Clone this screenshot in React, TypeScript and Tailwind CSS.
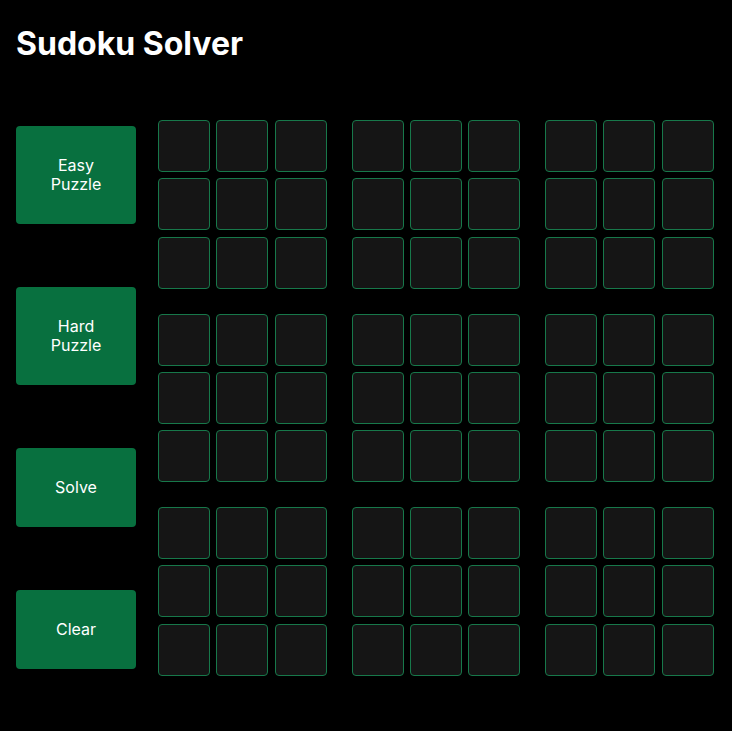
import { useState } from "react";

const buttons = [
  { label: ["Easy", "Puzzle"], tall: true },
  { label: ["Hard", "Puzzle"], tall: true },
  { label: ["Solve"], tall: false },
  { label: ["Clear"], tall: false },
];

function Block({ cells, onChange }: { cells: string[]; onChange: (i: number, v: string) => void }) {
  return (
    <div className="grid grid-cols-3 gap-[6.25px]">
      {cells.map((v, i) => (
        <input
          key={i}
          value={v}
          maxLength={1}
          onChange={(e) => onChange(i, e.target.value)}
          className="h-[52px] w-[52px] rounded-[4px] border border-[#17784a] bg-[#151515] text-center text-xl text-white outline-none"
        />
      ))}
    </div>
  );
}

export default function App() {
  const [board, setBoard] = useState<string[][]>(() =>
    Array.from({ length: 9 }, () => Array(9).fill(""))
  );

  function setCell(b: number, i: number, v: string) {
    setBoard((prev) => prev.map((blk, bi) => (bi === b ? blk.map((c, ci) => (ci === i ? v : c)) : blk)));
  }

  return (
    <div
      className="min-h-[731px] bg-black px-4 text-white"
      style={{ fontFamily: "Inter, 'Noto Sans', sans-serif" }}
    >
      <h1 className="pt-[22px] text-[32px] font-bold leading-[44px]">Sudoku Solver</h1>
      <div className="mt-[54px] flex gap-[22px]">
        <div className="flex w-[120px] flex-col justify-between">
          {buttons.map((b) => (
            <button
              key={b.label.join(" ")}
              onClick={() => {
                if (b.label[0] === "Clear") setBoard(Array.from({ length: 9 }, () => Array(9).fill("")));
              }}
              className={`my-1.5 flex w-[120px] flex-col items-center justify-center rounded-[4px] bg-[#08703f] text-base leading-[19px] text-white ${
                b.tall ? "h-[98px]" : "h-[79px]"
              }`}
            >
              {b.label.map((l) => (
                <span key={l}>{l}</span>
              ))}
            </button>
          ))}
        </div>
        <div className="grid grid-cols-3 gap-[25px]">
          {board.map((blk, b) => (
            <Block key={b} cells={blk} onChange={(i, v) => setCell(b, i, v)} />
          ))}
        </div>
      </div>
    </div>
  );
}
